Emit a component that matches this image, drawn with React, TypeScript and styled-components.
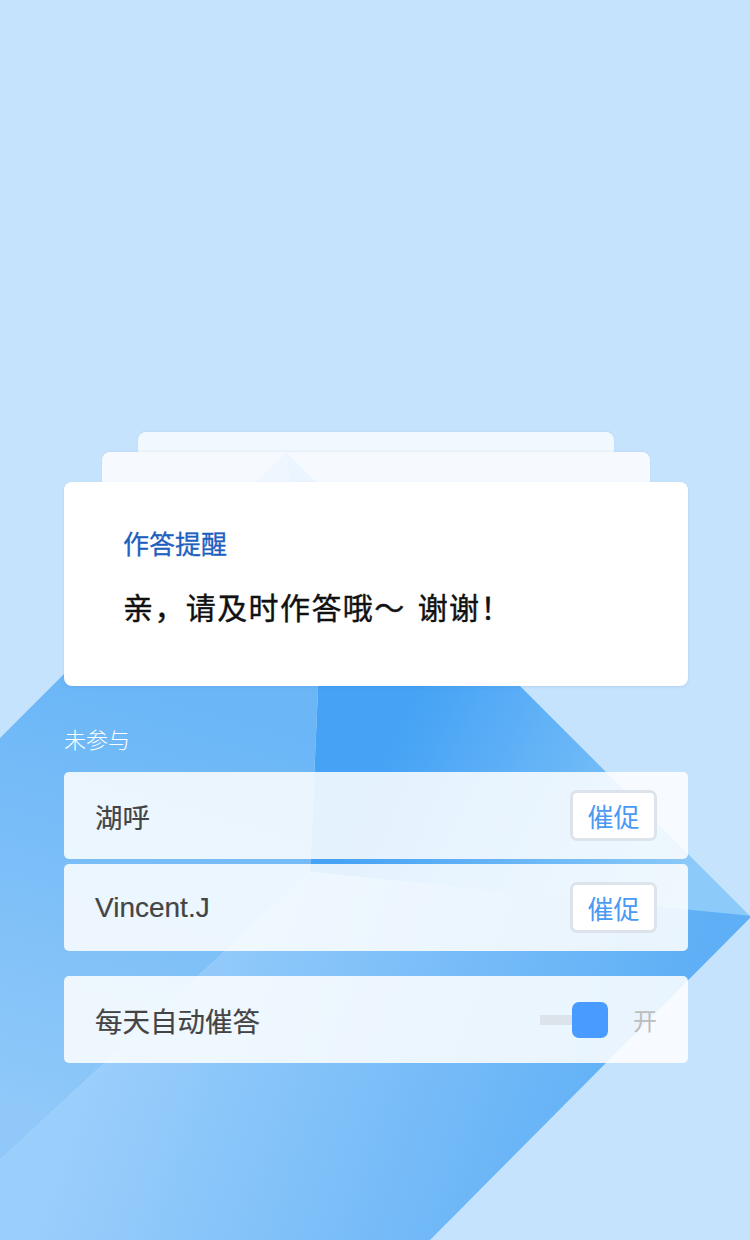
import styled, { createGlobalStyle } from 'styled-components';

const GlobalStyle = createGlobalStyle`
  html, body {
    margin: 0;
    padding: 0;
    background: #c6e3fd;
  }
  body {
    font-family: 'Noto Sans CJK SC', 'Noto Sans', sans-serif;
  }
`;

const Page = styled.div`
  position: relative;
  width: 750px;
  height: 1240px;
  overflow: hidden;
  background: #c6e3fd;
`;

const Backdrop = styled.svg`
  position: absolute;
  top: 0;
  left: 0;
  width: 750px;
  height: 1240px;
`;

const Content = styled.div`
  position: relative;
  display: flex;
  flex-direction: column;
  padding: 432px 62px 0 64px;
`;

const SheetStack = styled.div`
  display: flex;
  flex-direction: column;
  align-items: center;
`;

const BackSheet = styled.div<{ $width: number; $height: number; $bg: string }>`
  width: ${(p) => p.$width}px;
  height: ${(p) => p.$height}px;
  background: ${(p) => p.$bg};
  border-radius: 8px 8px 0 0;
  box-shadow: 0 -1px 2px rgba(120, 160, 200, 0.12);
`;

const NoticeCard = styled.div`
  width: 624px;
  height: 204px;
  box-sizing: border-box;
  padding: 40px 58px 0 59px;
  background: #ffffff;
  border-radius: 8px;
  box-shadow: 0 1px 3px rgba(60, 120, 190, 0.15);
`;

const NoticeTitle = styled.div`
  font-size: 26px;
  line-height: 42px;
  font-weight: 400;
  color: #1e60c0;
  -webkit-text-stroke: 0.3px #1e60c0;
`;

const NoticeBody = styled.div`
  margin-top: 20px;
  font-size: 30px;
  line-height: 44px;
  font-weight: 400;
  color: #111111;
  letter-spacing: 1.4px;
  word-spacing: 4px;
  -webkit-text-stroke: 0.4px #111111;
`;

const SectionLabel = styled.div`
  margin-top: 36px;
  font-size: 22px;
  line-height: 32px;
  font-weight: 300;
  color: #ffffff;
`;

const RowList = styled.div`
  display: flex;
  flex-direction: column;
  gap: 5px;
  margin-top: 18px;
`;

const Row = styled.div<{ $gapTop?: number }>`
  display: flex;
  align-items: center;
  justify-content: space-between;
  width: 624px;
  height: 87px;
  box-sizing: border-box;
  padding: 0 31px;
  margin-top: ${(p) => p.$gapTop ?? 0}px;
  background: rgba(255, 255, 255, 0.86);
  border-radius: 5px;
`;

const RowName = styled.span`
  font-size: 27.5px;
  color: #444444;
  -webkit-text-stroke: 0.2px #444444;
`;

const LatinName = styled(RowName)`
  font-family: 'Liberation Sans', 'Noto Sans CJK SC', sans-serif;
  font-size: 28px;
`;

const UrgeButton = styled.button`
  width: 87px;
  height: 51px;
  box-sizing: border-box;
  padding: 0;
  background: #ffffff;
  border: 3px solid #dde3ea;
  border-radius: 7px;
  font-family: 'Noto Sans CJK SC', sans-serif;
  font-size: 26px;
  color: #4a99f4;
`;

const SwitchGroup = styled.div`
  display: flex;
  align-items: center;
`;

const Track = styled.div`
  position: relative;
  width: 68px;
  height: 36px;
  display: flex;
  align-items: center;
`;

const TrackBar = styled.div`
  width: 40px;
  height: 10px;
  background: #dde3ea;
`;

const Knob = styled.div`
  position: absolute;
  right: 0;
  top: 0;
  width: 36px;
  height: 36px;
  border-radius: 7px;
  background: #4a9bff;
`;

const SwitchText = styled.span`
  margin-left: 25px;
  font-size: 24px;
  color: #bdbdbd;
`;

const members = [
  { name: '湖呼', latin: false },
  { name: 'Vincent.J', latin: true },
];

export default function App() {
  return (
    <Page>
      <GlobalStyle />
      <Backdrop viewBox="0 0 750 1240">
        <defs>
          <linearGradient id="rightFacet" x1="400" y1="720" x2="700" y2="860" gradientUnits="userSpaceOnUse">
            <stop offset="0" stopColor="#45a2f5" />
            <stop offset="1" stopColor="#8ccaf9" />
          </linearGradient>
          <linearGradient id="leftFacet" x1="200" y1="700" x2="80" y2="1120" gradientUnits="userSpaceOnUse">
            <stop offset="0" stopColor="#6ab6f7" />
            <stop offset="1" stopColor="#8fc8f9" />
          </linearGradient>
          <linearGradient id="bottomFacet" x1="120" y1="1000" x2="620" y2="1180" gradientUnits="userSpaceOnUse">
            <stop offset="0" stopColor="#9acefb" />
            <stop offset="1" stopColor="#5eaff6" />
          </linearGradient>
        </defs>
        <polygon points="286,452 752,918 310,872 318,690" fill="url(#rightFacet)" />
        <polygon points="0,738 286,452 318,690 310,872 0,1160" fill="url(#leftFacet)" />
        <polygon points="310,872 752,916 430,1240 0,1240 0,1160" fill="url(#bottomFacet)" />
      </Backdrop>
      <Content>
        <SheetStack>
          <BackSheet $width={476} $height={20} $bg="#f1f8fe" />
          <BackSheet $width={548} $height={30} $bg="rgba(250, 252, 255, 0.92)" />
          <NoticeCard>
            <NoticeTitle>作答提醒</NoticeTitle>
            <NoticeBody>亲，请及时作答哦～ 谢谢！</NoticeBody>
          </NoticeCard>
        </SheetStack>
        <SectionLabel>未参与</SectionLabel>
        <RowList>
          {members.map((m) => (
            <Row key={m.name}>
              {m.latin ? <LatinName>{m.name}</LatinName> : <RowName>{m.name}</RowName>}
              <UrgeButton type="button">催促</UrgeButton>
            </Row>
          ))}
          <Row $gapTop={20}>
            <RowName>每天自动催答</RowName>
            <SwitchGroup>
              <Track>
                <TrackBar />
                <Knob />
              </Track>
              <SwitchText>开</SwitchText>
            </SwitchGroup>
          </Row>
        </RowList>
      </Content>
    </Page>
  );
}
